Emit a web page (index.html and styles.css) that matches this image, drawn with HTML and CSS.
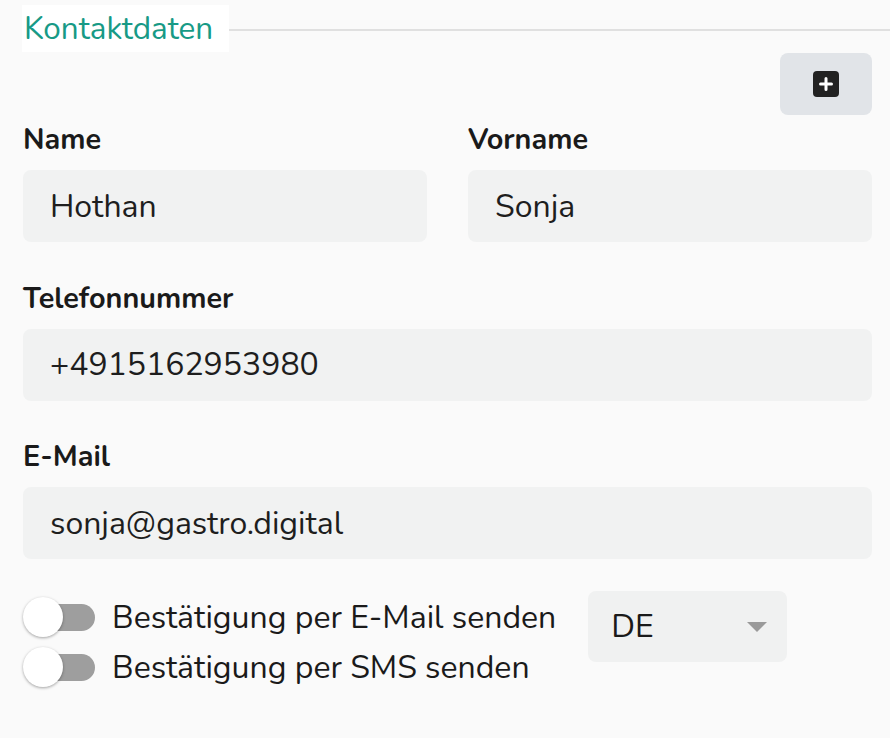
FILE: index.html
```html
<!DOCTYPE html>
<html lang="de">
<head>
    <meta charset="UTF-8" />
    <meta name="viewport" content="width=device-width, initial-scale=1.0"/>
    <title>Kontaktdaten</title>
    <link rel="stylesheet" href="styles.css">
</head>
<body>
<main class="contact-form">
    <div class="section-title">
        <span class="legend">Kontaktdaten</span>
        <span class="rule"></span>
    </div>

    <div class="actions">
        <button class="add-btn" type="button" aria-label="Hinzufügen">
            <svg width="26" height="26" viewBox="0 0 26 26">
                <rect x="0" y="0" width="26" height="26" rx="4" fill="#222"/>
                <path d="M7.5 13h11M13 7.5v11" stroke="#fff" stroke-width="3" stroke-linecap="round"/>
            </svg>
        </button>
    </div>

    <div class="row two-cols">
        <label class="field">
            <span class="field-label">Name</span>
            <input class="field-input" type="text" value="Hothan">
        </label>
        <label class="field">
            <span class="field-label">Vorname</span>
            <input class="field-input" type="text" value="Sonja">
        </label>
    </div>

    <div class="row">
        <label class="field">
            <span class="field-label">Telefonnummer</span>
            <input class="field-input" type="text" value="+4915162953980">
        </label>
    </div>

    <div class="row">
        <label class="field">
            <span class="field-label">E-Mail</span>
            <input class="field-input" type="text" value="sonja@gastro.digital">
        </label>
    </div>

    <div class="options">
        <div class="toggles">
            <label class="switch-row">
                <span class="switch"><span class="track"></span><span class="knob"></span></span>
                Bestätigung per E-Mail senden
            </label>
            <label class="switch-row">
                <span class="switch"><span class="track"></span><span class="knob"></span></span>
                Bestätigung per SMS senden
            </label>
        </div>
        <div class="lang-select">
            <span>DE</span>
            <span class="caret"></span>
        </div>
    </div>
</main>
</body>
</html>
```

FILE: styles.css
```css
* {
    box-sizing: border-box;
    font-family: 'Nunito', 'Open Sans', sans-serif;
}
body {
    margin: 0;
    padding: 5px 18px 0 23px;
    background: #fafafa;
    color: #1a1a1a;
    min-height: 100vh;
    overflow: hidden;
}
.section-title {
    display: flex;
    align-items: center;
    margin-left: -1px;
    margin-right: -18px;
}
.legend {
    background: #fff;
    color: #179a86;
    font-size: 31.5px;
    height: 47px;
    line-height: 47px;
    padding: 0 16px 0 2px;
}
.rule {
    flex: 1;
    height: 2px;
    margin-top: 3px;
    background: #e0e0e0;
}
.actions {
    display: flex;
    justify-content: flex-end;
    margin-top: 1px;
}
.add-btn {
    width: 92px;
    height: 62px;
    border: none;
    border-radius: 8px;
    background: #e1e4e8;
    display: flex;
    align-items: center;
    justify-content: center;
    cursor: pointer;
    padding: 0;
}
.row {
    margin-top: 40.5px;
}
.actions + .row {
    margin-top: 9px;
}
.two-cols {
    display: grid;
    grid-template-columns: 1fr 1fr;
    gap: 41px;
}
.field {
    display: flex;
    flex-direction: column;
    gap: 14px;
}
.field-label {
    font-size: 28.8px;
    line-height: 32px;
    font-weight: bold;
    color: #1a1a1a;
}
.field-input {
    height: 72px;
    border: none;
    border-radius: 8px;
    background: #f1f2f2;
    padding: 0 27px;
    font-size: 32px;
    color: #1e1e1e;
    outline: none;
    width: 100%;
}
.options {
    display: flex;
    align-items: flex-start;
    gap: 32px;
    margin-top: 32px;
}
.toggles {
    display: flex;
    flex-direction: column;
    margin-top: 1px;
}
.switch-row {
    display: flex;
    align-items: center;
    gap: 17px;
    height: 50px;
    font-size: 32px;
    color: #1a1a1a;
}
.switch {
    position: relative;
    width: 72px;
    height: 40px;
    flex-shrink: 0;
}
.switch .track {
    position: absolute;
    left: 2px;
    right: 0;
    top: 7px;
    height: 27px;
    border-radius: 14px;
    background: #9e9e9e;
}
.switch .knob {
    position: absolute;
    left: 0;
    top: 0;
    width: 40px;
    height: 40px;
    border-radius: 50%;
    background: #fff;
    box-shadow: 0 1px 3px rgba(0,0,0,0.35);
}
.lang-select {
    width: 199px;
    height: 71px;
    border-radius: 8px;
    background: #f0f1f1;
    display: flex;
    align-items: center;
    justify-content: space-between;
    padding: 0 20px 0 23px;
    font-size: 32px;
    color: #1a1a1a;
}
.caret {
    width: 0;
    height: 0;
    border-left: 10px solid transparent;
    border-right: 10px solid transparent;
    border-top: 10px solid #9a9a9a;
}
```
